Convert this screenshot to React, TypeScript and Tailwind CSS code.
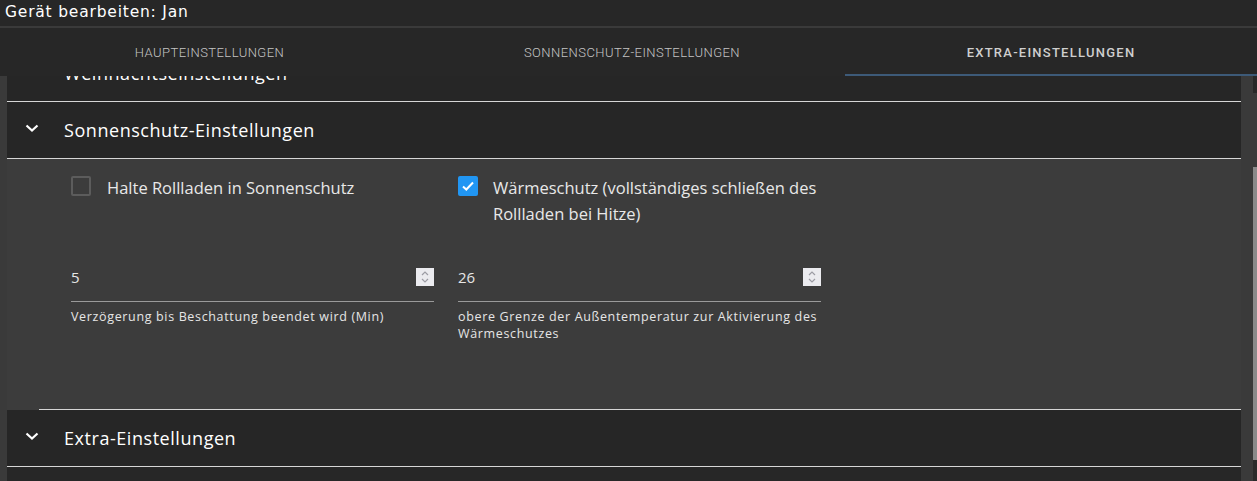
import React from 'react';

const Chevron = () => (
  <svg width="16" height="16" viewBox="0 0 16 16" className="-mt-[5px] shrink-0">
    <path d="M2.5 5.5 8 10.5 13.5 5.5" fill="none" stroke="#ffffff" strokeWidth="2.2" />
  </svg>
);

const Spinner = () => (
  <div className="flex h-[18px] w-[18px] flex-col items-center justify-center bg-[#ebebef]">
    <svg width="10" height="14" viewBox="0 0 10 14">
      <path d="M2 5 5 2 8 5" fill="none" stroke="#9c9ca4" strokeWidth="1.2" />
      <path d="M2 9 5 12 8 9" fill="none" stroke="#9c9ca4" strokeWidth="1.2" />
    </svg>
  </div>
);

const Checkbox = ({ checked }: { checked: boolean }) =>
  checked ? (
    <div className="mt-[1px] flex h-[20px] w-[20px] shrink-0 items-center justify-center rounded-[2px] bg-[#2196f3]">
      <svg width="16" height="16" viewBox="0 0 16 16">
        <path d="M3 8.5 6.3 11.5 13 4.5" fill="none" stroke="#ffffff" strokeWidth="2" />
      </svg>
    </div>
  ) : (
    <div className="mt-[1px] h-[20px] w-[20px] shrink-0 rounded-[2px] border-2 border-[#5c5c5c]" />
  );

const SectionHeader = ({ title }: { title: string }) => (
  <div className="flex h-[57px] items-center gap-[24px] border-b border-[#d6d6d6] bg-[#262626] pl-[17px] pr-4">
    <Chevron />
    <span className="text-[18px] tracking-[0.55px] text-white">{title}</span>
  </div>
);

const NumberField = ({ value, helper }: { value: string; helper: string }) => (
  <div className="flex flex-col">
    <div className="border-b border-[#9a9a9a] pb-[6px]">
      <div className="flex h-[36px] items-center justify-between">
        <span className="text-[15px] text-[#e6e6e6]">{value}</span>
        <Spinner />
      </div>
    </div>
    <p className="mt-[6px] text-[12.5px] leading-[17px] tracking-[0.65px] text-[#e6e6e6]">{helper}</p>
  </div>
);

const tabs = ['Haupteinstellungen', 'Sonnenschutz-Einstellungen', 'Extra-Einstellungen'];

export default function App() {
  return (
    <div className="flex h-[481px] w-full flex-col overflow-hidden bg-[#272727] font-['Open_Sans',sans-serif]">
      <div className="flex h-[26px] items-center px-[5px] font-['DejaVu_Sans',sans-serif] text-[15.5px] tracking-[0.8px] text-white">
        Gerät bearbeiten: Jan
      </div>
      <div className="h-[2px] bg-[#3a3a3a]" />
      <div className="grid h-[48px] grid-cols-[419px_426px_1fr]">
        {tabs.map((t, i) => (
          <div
            key={t}
            className={
              i === 2
                ? 'flex items-center justify-center border-b-2 border-[#3d5a78] pt-[3px] font-["Roboto",sans-serif] text-[13px] font-medium uppercase tracking-[1.25px] text-[#cfcfcf]'
                : 'flex items-center justify-center pt-[1px] font-["Roboto",sans-serif] text-[13px] font-light uppercase tracking-[0.45px] text-[#c4c4c4]'
            }
          >
            {t}
          </div>
        ))}
      </div>
      <div className="flex min-h-0 flex-1">
        <div className="w-[7px] bg-[#3a3a3a]" />
        <div className="min-w-0 flex-1 overflow-hidden">
          <div className="-mt-[31px]">
            <SectionHeader title="Weihnachtseinstellungen" />
            <SectionHeader title="Sonnenschutz-Einstellungen" />
            <div className="bg-[#3c3c3c]">
              <div className="h-[250px] pl-[64px] pt-[16px]">
                <div className="grid grid-cols-[363px_363px] gap-x-[24px]">
                  <div className="flex items-start gap-[16px]">
                    <Checkbox checked={false} />
                    <span className="text-[16.5px] leading-[26px] text-[#e8e8e8]">Halte Rollladen in Sonnenschutz</span>
                  </div>
                  <div className="flex items-start gap-[15px]">
                    <Checkbox checked />
                    <span className="text-[16.5px] leading-[26px] text-[#e8e8e8]">
                      Wärmeschutz (vollständiges schließen des Rollladen bei Hitze)
                    </span>
                  </div>
                  <div className="mt-[32px]">
                    <NumberField value="5" helper="Verzögerung bis Beschattung beendet wird (Min)" />
                  </div>
                  <div className="mt-[32px]">
                    <NumberField
                      value="26"
                      helper="obere Grenze der Außentemperatur zur Aktivierung des Wärmeschutzes"
                    />
                  </div>
                </div>
              </div>
              <div className="ml-[32px] h-px bg-[#d6d6d6]" />
            </div>
            <SectionHeader title="Extra-Einstellungen" />
          </div>
        </div>
        <div className="w-[12px] bg-[#3a3a3a]" />
        <div className="flex w-[4px] flex-col">
          <div className="h-[17px] bg-[#282828]" />
          <div className="h-[74px] bg-[#3a3a3a]" />
          <div className="h-[293px] bg-[#8a8a8a]" />
          <div className="flex-1 bg-[#2a2a2a]" />
        </div>
      </div>
    </div>
  );
}
